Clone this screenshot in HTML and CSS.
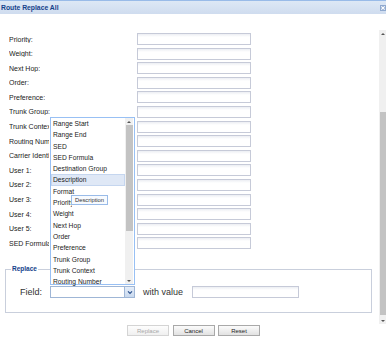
FILE: index.html
```html
<!DOCTYPE html>
<html>
<head>
<meta charset="utf-8">
<link rel="stylesheet" href="styles.css">
</head>
<body>
<div class="window">
  <div class="titlebar">
    <span class="title">Route Replace All</span>
    <span class="close"><svg width="6" height="6" viewBox="0 0 6 6"><rect x="0" y="0" width="6" height="6" fill="#8fa9cf"/><path d="M1.3 1.3L4.7 4.7M4.7 1.3L1.3 4.7" stroke="#fff" stroke-width="1.1"/></svg></span>
  </div>
  <div class="main">
    <div class="content">
      <div class="form">
        <label>Priority:</label><div class="input"></div>
        <label>Weight:</label><div class="input"></div>
        <label>Next Hop:</label><div class="input"></div>
        <label>Order:</label><div class="input"></div>
        <label>Preference:</label><div class="input"></div>
        <label>Trunk Group:</label><div class="input"></div>
        <label class="cut">Trunk Context:</label><div class="input"></div>
        <label class="cut">Routing Number:</label><div class="input"></div>
        <label class="cut">Carrier Identifier:</label><div class="input"></div>
        <label class="cut">User 1:</label><div class="input"></div>
        <label class="cut">User 2:</label><div class="input"></div>
        <label class="cut">User 3:</label><div class="input"></div>
        <label class="cut">User 4:</label><div class="input"></div>
        <label class="cut">User 5:</label><div class="input"></div>
        <label class="cut">SED Formula:</label><div class="input"></div>
      </div>
      <fieldset class="replace">
        <legend>Replace</legend>
        <div class="field-row">
          <span class="big-label field-label">Field:</span>
          <div class="combo">
            <div class="combo-text"></div>
            <div class="combo-trigger"><svg width="6" height="5" viewBox="0 0 6 5"><path d="M1 1.3L3 3.3L5 1.3" fill="none" stroke="#2a4f8c" stroke-width="1.2"/></svg></div>
          </div>
          <span class="big-label with-label">with value</span>
          <div class="input value-input"></div>
        </div>
      </fieldset>
      <div class="buttons">
        <div class="btn disabled">Replace</div>
        <div class="btn">Cancel</div>
        <div class="btn">Reset</div>
      </div>
    </div>
    <div class="vscroll">
      <div class="arrow up"></div>
      <div class="track"><div class="thumb"></div></div>
      <div class="arrow down"></div>
    </div>
  </div>

  <div class="dropdown">
    <ul class="items">
      <li>Range Start</li>
      <li>Range End</li>
      <li>SED</li>
      <li>SED Formula</li>
      <li>Destination Group</li>
      <li class="selected">Description</li>
      <li>Format</li>
      <li class="under-tip">Priority</li>
      <li>Weight</li>
      <li>Next Hop</li>
      <li>Order</li>
      <li>Preference</li>
      <li>Trunk Group</li>
      <li>Trunk Context</li>
      <li>Routing Number</li>
    </ul>
    <div class="list-scroll">
      <div class="arrow up"></div>
      <div class="ltrack"><div class="lthumb"></div></div>
      <div class="arrow down"></div>
    </div>
  </div>
  <div class="tooltip">Description</div>
</div>
</body>
</html>
```
FILE: styles.css
```css
* { box-sizing: border-box; }
html, body { margin: 0; padding: 0; }
body {
  width: 386px;
  height: 337px;
  overflow: hidden;
  background: #fff;
  font-family: "Liberation Sans", Arial, sans-serif;
  color: #222;
}
.window {
  position: relative;
  width: 386px;
  height: 337px;
}
.titlebar {
  height: 14px;
  display: flex;
  align-items: center;
  justify-content: space-between;
  border-top: 1px solid #99bbe8;
  background: linear-gradient(#dde8f5, #cfdcef);
  padding: 0 0 0 1px;
}
.title {
  font-weight: bold;
  font-size: 6.8px;
  color: #15428b;
}
.close {
  display: flex;
  width: 6px;
  height: 6px;
}
.main {
  display: flex;
  height: 323px;
}
.content {
  flex: 1;
  min-width: 0;
}
.form {
  display: grid;
  grid-template-columns: 128px 114px;
  grid-auto-rows: 12px;
  row-gap: 2.6px;
  padding: 19px 0 0 9px;
  align-items: center;
  justify-items: start;
}
.form label {
  font-size: 7px;
  color: #222;
  white-space: nowrap;
  overflow: hidden;
}
.form label.cut {
  max-width: 40px;
}
.form .input {
  justify-self: stretch;
}
.input {
  height: 12px;
  border: 1px solid #c6cad8;
  background: linear-gradient(#eceef3, #fff 3px);
}
.replace {
  margin: 16px 7px 0 5px;
  padding: 0 0 14px 0;
  border: 1px solid #c9cfdc;
  min-width: 0;
}
.replace legend {
  font-weight: bold;
  font-size: 6.5px;
  line-height: 8px;
  color: #15428b;
  padding: 0 1px;
  margin-left: 5px;
}
.field-row {
  display: flex;
  align-items: center;
  height: 12px;
  margin-top: 13px;
  padding-left: 14px;
}
.big-label {
  font-size: 9px;
  color: #333;
}
.field-label {
  width: 30px;
}
.combo {
  display: flex;
  width: 85px;
  height: 12px;
}
.combo-text {
  flex: 1;
  border: 1px solid #9fb6d6;
  border-right: none;
  background: #fff;
}
.combo-trigger {
  width: 11px;
  border: 1px solid #9fb6d6;
  background: linear-gradient(#e6eef9, #c9d9ee);
  display: flex;
  align-items: center;
  justify-content: center;
}
.with-label {
  margin-left: 8px;
  width: 49px;
}
.value-input {
  width: 107px;
}
.buttons {
  display: flex;
  gap: 3.5px;
  padding-left: 127px;
  margin-top: 12px;
}
.btn {
  width: 42px;
  height: 11px;
  border: 1px solid #a9a9a9;
  background: linear-gradient(#fbfbfb, #e2e2e2);
  font-size: 6px;
  color: #222;
  display: flex;
  align-items: center;
  justify-content: center;
}
.btn.disabled {
  color: #a8a8a8;
  border-color: #d4d4d4;
  background: linear-gradient(#fdfdfd, #f0f0f0);
}
.vscroll {
  width: 7px;
  margin-top: 16px;
  height: 294px;
  background: #f0f0f0;
  display: flex;
  flex-direction: column;
}
.vscroll .track {
  flex: 1;
  padding-top: 75px;
  padding-bottom: 2px;
}
.vscroll .thumb {
  height: 100%;
  background: #c3c3c3;
  margin: 0 0.5px;
}
.arrow {
  height: 7px;
  position: relative;
}
.arrow::after {
  content: "";
  position: absolute;
  left: 50%;
  top: 50%;
  margin-left: -2px;
  margin-top: -1px;
  border-left: 2px solid transparent;
  border-right: 2px solid transparent;
}
.arrow.up::after { border-bottom: 2.5px solid #555; }
.arrow.down::after { border-top: 2.5px solid #555; }

.dropdown {
  position: absolute;
  left: 50px;
  top: 117px;
  width: 85px;
  height: 168px;
  border: 1px solid #98c0f4;
  background: #fff;
  display: flex;
}
.items {
  list-style: none;
  margin: 0;
  padding: 0;
  flex: 1;
  min-width: 0;
}
.items li {
  height: 11.3px;
  line-height: 11.3px;
  font-size: 6.7px;
  padding-left: 2px;
  color: #222;
  white-space: nowrap;
}
.items li.under-tip {
  overflow: hidden;
  width: 21px;
}
.items li.selected {
  background: #dfe8f6;
  outline: 1px solid #c5d6ef;
  outline-offset: -1px;
}
.list-scroll {
  width: 8px;
  margin-right: 1px;
  background: #f0f0f0;
  display: flex;
  flex-direction: column;
}
.ltrack {
  flex: 1;
  padding-bottom: 46px;
}
.lthumb {
  height: 100%;
  background: #c3c3c3;
  margin: 0 0.5px;
}
.tooltip {
  position: absolute;
  left: 71px;
  top: 195px;
  width: 37px;
  height: 9.5px;
  border: 1px solid #99bbe8;
  background: #f7fafe;
  font-size: 5.8px;
  color: #333;
  display: flex;
  align-items: center;
  justify-content: center;
}
```
